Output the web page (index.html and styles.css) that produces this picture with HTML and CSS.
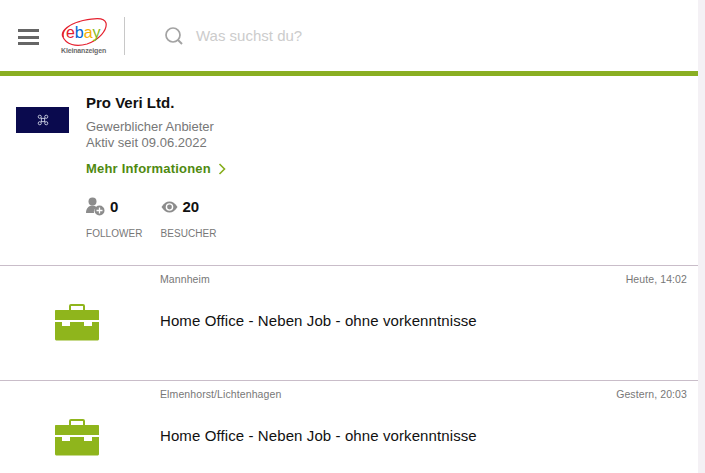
FILE: index.html
```html
<!DOCTYPE html>
<html lang="de">
<head>
<meta charset="utf-8">
<title>Pro Veri Ltd.</title>
<link rel="stylesheet" href="styles.css">
</head>
<body>
<div class="page">
  <main class="main">
    <header class="header">
      <div class="menu" aria-label="Menü"><span></span><span></span><span></span></div>
      <div class="logo">
        <svg class="logo-ring" width="46" height="30" viewBox="0 0 46 30"><path d="M2.500 20C0 13 10 6 22 3.500C32 1.500 43 -.5 45 6C46.500 13 38 23 26 27C15 30 5 28 1.500 19C0 13 9 7 19 4.500" fill="none" stroke="#e5202e" stroke-width="1.200"/></svg>
        <div class="ebay"><span class="e">e</span><span class="b">b</span><span class="a">a</span><span class="y">y</span></div>
        <div class="kl">Kleinanzeigen</div>
      </div>
      <div class="divider"></div>
      <svg class="search" width="20" height="20" viewBox="0 0 20 20"><circle cx="9" cy="9" r="7" fill="none" stroke="#a3a3a3" stroke-width="1.700"/><path d="M14 14L18 18" stroke="#a3a3a3" stroke-width="2"/></svg>
      <div class="placeholder">Was suchst du?</div>
    </header>
    <div class="bar"></div>
    <section class="profile">
      <div class="top">
        <div class="avatar">
          <svg width="12" height="12" viewBox="0 0 13 13"><g fill="none" stroke="#c9cde0" stroke-width="1"><circle cx="3" cy="3" r="1.700"/><circle cx="10" cy="3" r="1.700"/><circle cx="3" cy="10" r="1.700"/><circle cx="10" cy="10" r="1.700"/><rect x="4.700" y="4.700" width="3.600" height="3.600"/></g></svg>
        </div>
        <div class="info">
          <div class="name">Pro Veri Ltd.</div>
          <div class="sub first">Gewerblicher Anbieter</div>
          <div class="sub">Aktiv seit 09.06.2022</div>
          <div class="more">Mehr Informationen
            <svg width="8" height="12" viewBox="0 0 8 12"><path d="M1.500 1L6.500 6L1.500 11" fill="none" stroke="#86ad1c" stroke-width="1.600"/></svg>
          </div>
        </div>
      </div>
      <div class="stats">
        <div class="stat">
          <div class="stat-top">
            <svg width="19" height="19" viewBox="0 0 19 19"><g fill="#8c8c8c"><circle cx="6.500" cy="4.500" r="4"/><path d="M0 16C0 11 3 8.500 6.500 8.500C9 8.500 10 9.500 10.500 10.500C8.500 11.500 7.500 13.500 8 16Z"/><circle cx="13.500" cy="13.500" r="5"/></g><path d="M13.500 10.500V16.500M10.500 13.500H16.500" stroke="#fff" stroke-width="1.300"/></svg>
            <b>0</b>
          </div>
          <div class="stat-label">FOLLOWER</div>
        </div>
        <div class="stat">
          <div class="stat-top">
            <svg width="17" height="12" viewBox="0 0 17 12"><path d="M0.500 6C3 2 5.500 0.500 8.500 0.500C11.500 0.500 14 2 16.500 6C14 10 11.500 11.500 8.500 11.500C5.500 11.500 3 10 0.500 6Z" fill="#8c8c8c"/><circle cx="8.500" cy="6" r="3.800" fill="#fff"/><circle cx="8.500" cy="6" r="2.400" fill="#8c8c8c"/></svg>
            <b>20</b>
          </div>
          <div class="stat-label">BESUCHER</div>
        </div>
      </div>
    </section>
    <article class="item">
      <svg class="case" width="44" height="37" viewBox="0 0 44 37"><path d="M15 6V2C15 1.400 15.400 1 16 1H28C28.600 1 29 1.400 29 2V6" fill="none" stroke="#8fb51c" stroke-width="2"/><path d="M0 7C0 6.400 .4 6 1 6H43C43.600 6 44 6.400 44 7V16H0Z" fill="#8fb51c"/><path d="M0 18H7V22H15V18H29V22H37V18H44V35C44 36 43 36.500 42 36.500H2C1 36.500 0 36 0 35Z" fill="#8fb51c"/></svg>
      <div class="item-body">
        <div class="item-meta"><span>Mannheim</span><span>Heute, 14:02</span></div>
        <h2 class="item-title">Home Office - Neben Job - ohne vorkenntnisse</h2>
      </div>
    </article>
    <article class="item">
      <svg class="case" width="44" height="37" viewBox="0 0 44 37"><path d="M15 6V2C15 1.400 15.400 1 16 1H28C28.600 1 29 1.400 29 2V6" fill="none" stroke="#8fb51c" stroke-width="2"/><path d="M0 7C0 6.400 .4 6 1 6H43C43.600 6 44 6.400 44 7V16H0Z" fill="#8fb51c"/><path d="M0 18H7V22H15V18H29V22H37V18H44V35C44 36 43 36.500 42 36.500H2C1 36.500 0 36 0 35Z" fill="#8fb51c"/></svg>
      <div class="item-body">
        <div class="item-meta"><span>Elmenhorst/Lichtenhagen</span><span>Gestern, 20:03</span></div>
        <h2 class="item-title">Home Office - Neben Job - ohne vorkenntnisse</h2>
      </div>
    </article>
  </main>
  <div class="rail"></div>
</div>
</body>
</html>
```
FILE: styles.css
```css
* { box-sizing: border-box; }
html, body { margin: 0; height: 100%; overflow: hidden; background: #fff; }
body { font-family: "Liberation Sans", Arial, sans-serif; color: #111; }
.page { display: flex; width: 705px; height: 473px; overflow: hidden; }
.main { width: 698px; flex: none; }
.rail { flex: 1; background: #f4f1f5; }

.header { height: 71px; display: flex; align-items: flex-start; }
.menu { margin: 29px 0 0 18px; width: 21px; display: flex; flex-direction: column; gap: 3.500px; }
.menu span { display: block; height: 3px; background: #666; }
.logo { position: relative; width: 46px; height: 40px; margin: 17px 0 0 22px; flex: none; }
.logo-ring { position: absolute; left: 0; top: 0; }
.ebay { position: absolute; left: 5px; top: 6px; font-size: 16px; line-height: 20px; letter-spacing: -.1px; }
.ebay .e { color: #e5202e; }
.ebay .b { color: #0064d2; }
.ebay .a { color: #f5af02; }
.ebay .y { color: #86b817; }
.kl { position: absolute; left: 0; top: 29px; font-size: 7px; line-height: 9px; font-weight: 700; color: #6b6b6b; white-space: nowrap; letter-spacing: -.15px; }
.divider { width: 1px; height: 38px; margin: 17px 0 0 17px; background: #c8c8c8; }
.search { margin: 26px 0 0 39px; flex: none; }
.placeholder { margin: 27px 0 0 12px; font-size: 15px; line-height: 18px; color: #ccc; }

.bar { height: 5px; background: #8aaf22; }

.profile { height: 189px; padding: 18px 0 0 16px; }
.top { display: flex; }
.avatar { width: 53px; height: 26px; margin-top: 13px; background: #0a0a4e; display: flex; align-items: center; justify-content: center; flex: none; }
.info { margin-left: 17px; }
.name { font-size: 15px; line-height: 17px; font-weight: 700; color: #111; }
.sub { font-size: 13px; line-height: 16px; color: #777; }
.sub.first { margin-top: 8px; }
.more { margin-top: 10px; font-size: 13px; line-height: 15px; font-weight: 700; letter-spacing: .2px; color: #4f8a10; display: flex; align-items: center; gap: 7px; }
.stats { display: flex; margin: 21px 0 0 70px; gap: 18px; }
.stat-top { display: flex; align-items: center; gap: 5px; height: 19px; }
.stat-top b { font-size: 15px; color: #111; }
.stat-label { margin-top: 12px; font-size: 10px; line-height: 12px; letter-spacing: .05px; color: #777; }

.item { height: 115px; border-top: 1px solid #c9bdc9; display: flex; }
.case { margin: 38px 0 0 55px; flex: none; }
.item-body { flex: 1; margin-left: 61px; padding: 7px 11px 0 0; }
.item-meta { display: flex; justify-content: space-between; font-size: 10.500px; line-height: 12px; letter-spacing: .1px; color: #777; }
.item-title { margin: 27px 0 0; font-size: 15px; line-height: 18px; letter-spacing: .1px; font-weight: 400; color: #111; }
```
